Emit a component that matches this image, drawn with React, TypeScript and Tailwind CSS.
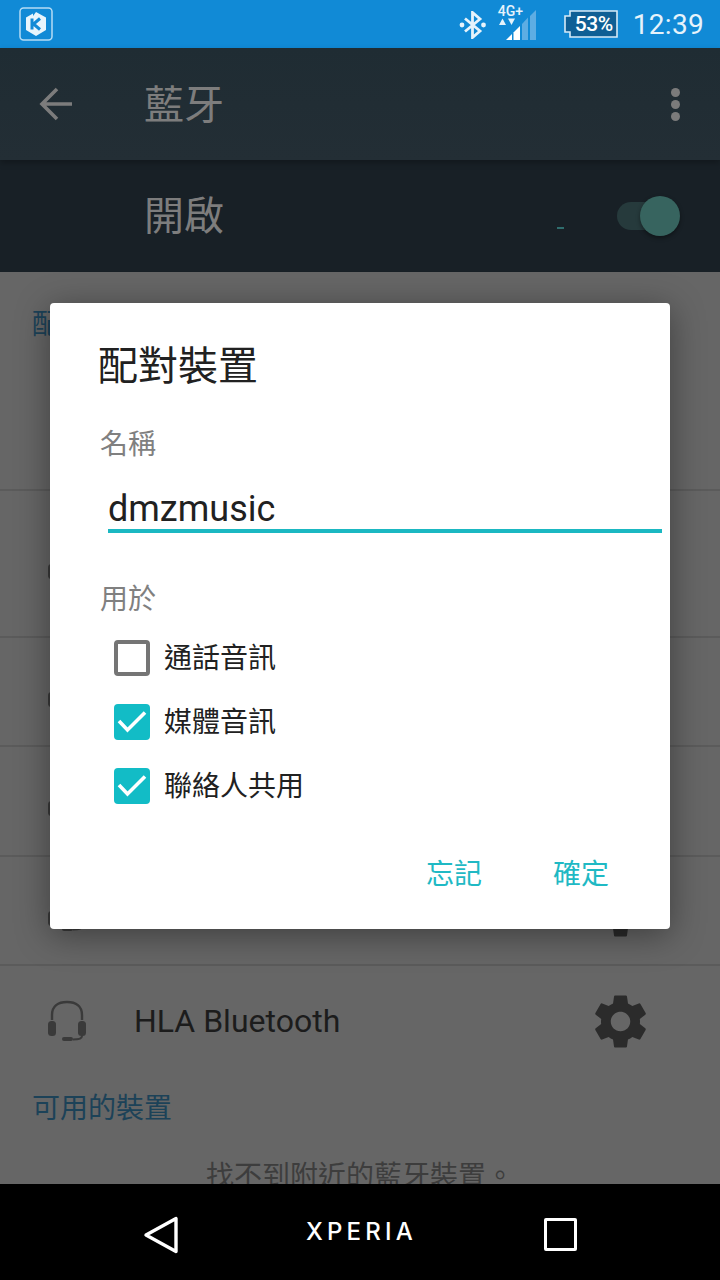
import React from "react";

const GEAR =
  "M19.14 12.94c.04-.3.06-.61.06-.94 0-.32-.02-.64-.07-.94l2.03-1.58a.49.49 0 0 0 .12-.61l-1.92-3.32a.488.488 0 0 0-.59-.22l-2.39.96c-.5-.38-1.03-.7-1.62-.94l-.36-2.54a.484.484 0 0 0-.48-.41h-3.84c-.24 0-.43.17-.47.41l-.36 2.54c-.59.24-1.13.57-1.62.94l-2.39-.96c-.22-.08-.47 0-.59.22L2.74 8.87c-.12.21-.08.47.12.61l2.03 1.58c-.05.3-.09.63-.09.94s.02.64.07.94l-2.03 1.58a.49.49 0 0 0-.12.61l1.92 3.32c.12.22.37.29.59.22l2.39-.96c.5.38 1.03.7 1.62.94l.36 2.54c.05.24.24.41.48.41h3.84c.24 0 .44-.17.47-.41l.36-2.54c.59-.24 1.13-.56 1.62-.94l2.39.96c.22.08.47 0 .59-.22l1.92-3.32c.12-.22.07-.47-.12-.61l-2.01-1.58zM12 15.6c-1.98 0-3.6-1.62-3.6-3.6s1.62-3.6 3.6-3.6 3.6 1.62 3.6 3.6-1.62 3.6-3.6 3.6z";

function Gear() {
  return (
    <svg width="65" height="65" viewBox="0 0 24 24" className="shrink-0">
      <path d={GEAR} fill="#2b2b2b" />
    </svg>
  );
}

function Headset() {
  return (
    <svg width="40" height="42" viewBox="0 0 40 42" className="shrink-0">
      <path d="M5 20V15C5 6 11 2 20 2s15 4 15 13v5" fill="none" stroke="#3a3a3a" strokeWidth="2.4" />
      <rect x="1" y="21" width="8" height="15" rx="3.5" fill="#3a3a3a" />
      <rect x="31" y="21" width="8" height="15" rx="3.5" fill="#3a3a3a" />
      <path d="M35 36c0 2.5-3 3.5-9 3.5" fill="none" stroke="#3a3a3a" strokeWidth="2" />
      <rect x="15" y="37" width="11" height="4" rx="2" fill="#3a3a3a" />
    </svg>
  );
}

function DeviceRow({ h, name }: { h: string; name?: string }) {
  return (
    <div className={`${h} shrink-0 flex items-center pl-[47px] pr-[67px] border-b-2 border-[#5b5b5b]`}>
      <Headset />
      <div className="ml-[47px] flex-1 text-[32px] text-[#1c1c1c]">{name}</div>
      <Gear />
    </div>
  );
}

function Check({ checked, label }: { checked: boolean; label: string }) {
  return (
    <div className="h-[36px] flex items-center">
      {checked ? (
        <div className="w-[36px] h-[36px] rounded-[4px] bg-[#12bcc6]">
          <svg width="36" height="36" viewBox="0 0 36 36">
            <path d="M5 17 13.5 26 31 8.5" fill="none" stroke="#ffffff" strokeWidth="3.6" />
          </svg>
        </div>
      ) : (
        <div className="w-[36px] h-[36px] rounded-[4px] border-4 border-[#757575]" />
      )}
      <span className="ml-[14px] mt-[2px] text-[28px] leading-[36px] text-[#212121]">{label}</span>
    </div>
  );
}

function StatusIcons() {
  return (
    <div className="flex items-center">
      <svg width="28" height="28" viewBox="0 0 28 28" className="mr-[11px] mt-[2px]">
        <path d="M6 7.5 21 20 13.5 26.5V1.5L21 8 6 20.5" fill="none" stroke="#e6f3fb" strokeWidth="2.8" />
        <circle cx="3" cy="14" r="2.4" fill="#e6f3fb" />
        <circle cx="24.5" cy="14" r="2.4" fill="#e6f3fb" />
      </svg>
      <div className="relative w-[39px] h-[34px] mr-[26px]">
        <span className="absolute left-0 top-[-2px] text-[14px] leading-[13px] font-medium text-[#e6f3fb]">4G+</span>
        <svg width="39" height="34" viewBox="0 0 39 34" className="absolute left-0 top-0">
          <polygon points="1,18 8,18 4.5,11.5" fill="#e6f3fb" />
          <polygon points="10,11.5 17,11.5 13.5,18" fill="#e6f3fb" />
          <polygon points="8,33 14,33 14,27 8,33" fill="#ffffff" />
          <polygon points="15.5,33 22,33 22,19 15.5,25.5" fill="#ffffff" />
          <polygon points="24,33 30,33 30,10.5 24,17" fill="#5eade3" />
          <polygon points="32,33 38,33 38,3 32,9" fill="#5eade3" />
        </svg>
      </div>
      <div className="relative w-[55px] h-[28px] mr-[15px]">
        <svg width="55" height="28" viewBox="0 0 55 28" className="absolute left-0 top-0">
          <path d="M7 1H54V27H7V22H2V6H7Z" fill="#0f5f95" stroke="#d6eaf7" strokeWidth="1.6" />
        </svg>
        <span className="absolute left-[11px] top-0 w-[40px] text-center text-[21px] leading-[28px] font-medium text-white tracking-[-0.5px]">
          53%
        </span>
      </div>
      <span className="mt-[1px] text-[28px] leading-[48px] text-[#e6f3fb] tracking-[0.3px]">12:39</span>
    </div>
  );
}

export default function App() {
  return (
    <div className="relative w-[720px] h-[1280px] overflow-hidden flex flex-col bg-[#666666] font-['Roboto','Noto_Sans_CJK_TC',sans-serif]">
      {/* Status bar */}
      <div className="h-[48px] shrink-0 bg-[#118ad6] flex items-center justify-between pl-[19px] pr-[16px]">
        <svg width="34" height="34" viewBox="0 0 34 34">
          <rect x="1" y="1" width="32" height="32" rx="3.5" fill="none" stroke="#b5dcf5" strokeWidth="1.5" />
          <path d="M17 5 27 10.5V23L17 29 7 23V10.5L14 6.5V9Z" fill="#e8f5fc" />
          <path d="M13 11.5V22.5M21 11.5 14.5 17 21 22.5" fill="none" stroke="#118ad6" strokeWidth="3" />
        </svg>
        <StatusIcons />
      </div>

      {/* App bar */}
      <div className="relative z-10 h-[112px] shrink-0 bg-gradient-to-b from-[#1f2c33] to-[#232e35] flex items-center pl-[39px] pr-[40px] shadow-[0_3px_6px_rgba(0,0,0,0.25)]">
        <svg width="36" height="34" viewBox="0 0 36 34" className="shrink-0">
          <path d="M33 17H4M18 2 3 17l15 15" fill="none" stroke="#7c7c7c" strokeWidth="3.6" />
        </svg>
        <div className="ml-[69px] flex-1 mt-[4px] text-[40px] leading-[56px] text-[#7d7d7d]">藍牙</div>
        <div className="flex flex-col gap-[3px]">
          <div className="w-[9px] h-[9px] rounded-full bg-[#7b7b7b]" />
          <div className="w-[9px] h-[9px] rounded-full bg-[#7b7b7b]" />
          <div className="w-[9px] h-[9px] rounded-full bg-[#7b7b7b]" />
        </div>
      </div>

      {/* On / off bar */}
      <div className="relative h-[112px] shrink-0 bg-[#182026] flex items-center pl-[144px] pr-[40px]">
        <div className="flex-1 mt-[2px] text-[40px] leading-[56px] text-[#7d7d7d]">開啟</div>
        <div className="absolute left-[557px] top-[67px] w-[7px] h-[2px] bg-[#2f6d6d]" />
        <div className="relative w-[63px] h-[40px]">
          <div className="absolute left-0 top-[6px] w-[44px] h-[28px] rounded-full bg-[#263a3c]" />
          <div className="absolute right-0 top-0 w-[40px] h-[40px] rounded-full bg-[#37645f] shadow-[0_2px_4px_rgba(0,0,0,0.4)]" />
        </div>
      </div>

      {/* List behind the dialog */}
      <div className="flex-1 min-h-0 overflow-hidden flex flex-col">
        <div className="h-[219px] shrink-0 border-b-2 border-[#5b5b5b] pl-[32px] pt-[33px]">
          <div className="text-[28px] leading-[40px] text-[#1c4258]">配對的裝置</div>
        </div>
        <DeviceRow h="h-[147px]" />
        <DeviceRow h="h-[109px]" />
        <DeviceRow h="h-[110px]" />
        <DeviceRow h="h-[109px]" />
        <div className="h-[110px] shrink-0 flex items-center pl-[47px] pr-[67px]">
          <Headset />
          <div className="ml-[47px] flex-1 text-[32px] leading-[44px] text-[#1c1c1c]">HLA Bluetooth</div>
          <Gear />
        </div>
        <div className="shrink-0 pl-[32px] mt-[13px] text-[28px] leading-[40px] text-[#1c4258]">可用的裝置</div>
        <div className="shrink-0 mt-[28px] text-center text-[28px] leading-[40px] text-[#3d3d3d]">找不到附近的藍牙裝置。</div>
      </div>

      {/* Navigation bar */}
      <div className="relative z-10 h-[96px] shrink-0 bg-black flex items-center">
        <div className="w-[143px]" />
        <svg width="36" height="38" viewBox="0 0 36 38" className="shrink-0 mt-[6px]">
          <path d="M33 2.5V35.5L3 19Z" fill="none" stroke="#ffffff" strokeWidth="3.4" strokeLinejoin="round" />
        </svg>
        <div className="w-[127px] shrink-0" />
        <span className="w-[112px] shrink-0 -mt-[1px] text-[24px] leading-[30px] font-medium tracking-[4.2px] text-white font-['Inter',sans-serif]">XPERIA</span>
        <div className="w-[126px] shrink-0" />
        <div className="w-[33px] h-[33px] shrink-0 mt-[5px] rounded-[2px] border-[3.5px] border-white" />
      </div>

      {/* Dialog */}
      <div className="absolute left-[50px] top-[303px] w-[620px] h-[626px] z-20 bg-white rounded-[4px] shadow-[0_6px_34px_rgba(0,0,0,0.4)] flex flex-col pl-[49px] pr-[8px]">
        <div className="mt-[36px] text-[40px] leading-[56px] text-[#212121] -ml-[1px]">配對裝置</div>
        <div className="mt-[30px] text-[28px] leading-[40px] text-[#808080] ml-[1px]">名稱</div>
        <div className="mt-[20px] ml-[9px] h-[48px] pt-[3px] border-b-4 border-[#1bb8c2] text-[36px] leading-[42px] text-[#212121]">dmzmusic</div>
        <div className="mt-[47px] text-[28px] leading-[40px] text-[#808080] ml-[1px]">用於</div>
        <div className="mt-[20px] ml-[15px] flex flex-col gap-[28px]">
          <Check checked={false} label="通話音訊" />
          <Check checked label="媒體音訊" />
          <Check checked label="聯絡人共用" />
        </div>
        <div className="mt-[51px] flex justify-end pr-[53px] gap-[71px] text-[28px] leading-[40px] text-[#1fb9c4]">
          <span>忘記</span>
          <span>確定</span>
        </div>
      </div>
    </div>
  );
}
